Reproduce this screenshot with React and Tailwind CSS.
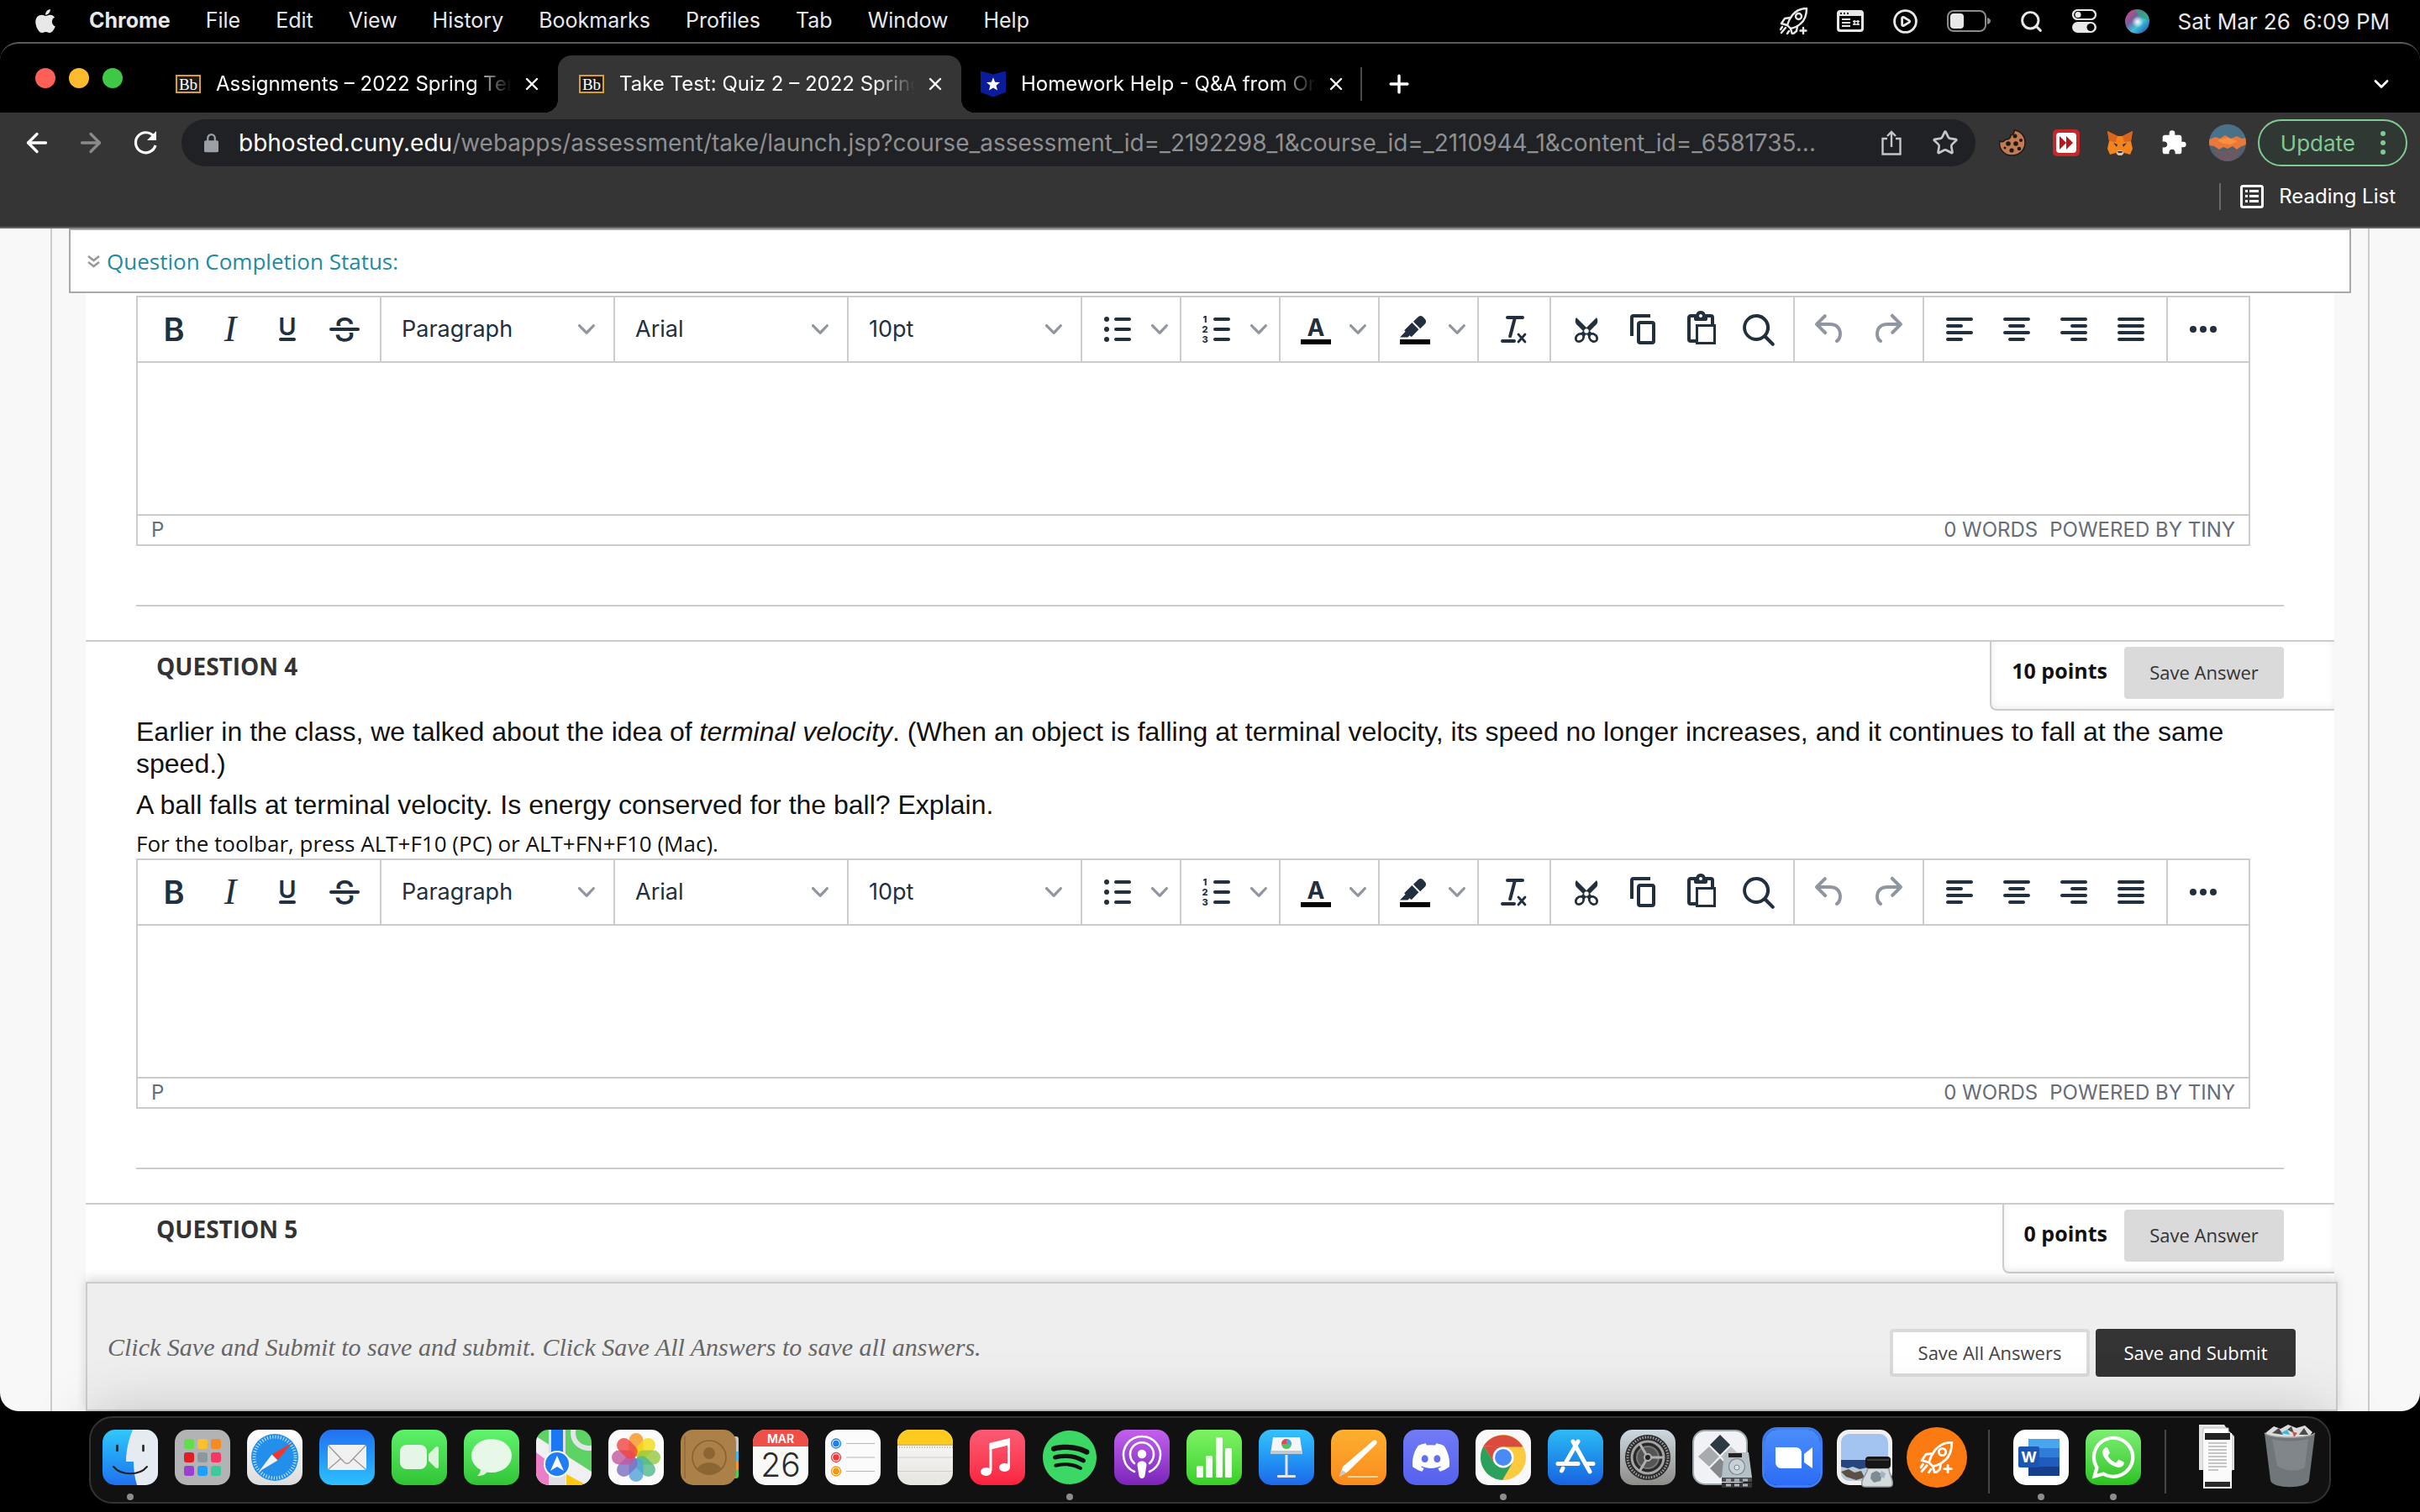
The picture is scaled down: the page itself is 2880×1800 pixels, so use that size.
import React, { useState } from 'react';
import { ArrowLeft, ArrowRight, ChevronDown, Plus, Search, Star, X, CirclePlay } from 'lucide-react';
import { FaApple, FaDiscord, FaSpotify, FaWhatsapp } from 'react-icons/fa';
import { MdExtension } from 'react-icons/md';

const MENU = ['File', 'Edit', 'View', 'History', 'Bookmarks', 'Profiles', 'Tab', 'Window', 'Help'];

const RocketIcon = ({ className }) => (
  <svg className={className} viewBox="0 0 34 32" fill="none" stroke="currentColor" strokeWidth="2.4" strokeLinejoin="round" strokeLinecap="round">
    <path d="M32 1c-7 0-13 3-17 8-3 4-5 8-6 12l4 4c5-1 9-3 12-6 5-4 7-10 7-18z" />
    <circle cx="22.500" cy="10.500" r="3.500" />
    <path d="M13 12l-7 1-4 6 7 2M21 22l-1 6-5 4-2-7M7 24l-5 6M11 28l-2 3M3 23l-2 3M28 24v7M24.500 27.500h7" />
  </svg>
);

const MenuBar = () => (
  <header className="flex h-[50px] items-center pl-[38px] pr-9 text-[25px] text-[#e8e8e8]">
    <FaApple className="mr-[36px] size-[32px]" />
    <nav className="flex items-center gap-[42px]">
      <button className="font-bold">Chrome</button>
      {MENU.map((item) => (
        <button key={item}>{item}</button>
      ))}
    </nav>
    <div className="ml-auto flex items-center gap-[34px]">
      <RocketIcon className="h-[32px] w-[34px]" />
      <svg className="h-[26px] w-[32px]" viewBox="0 0 32 26" fill="currentColor">
        <path fillRule="evenodd" d="M4 0h24a4 4 0 0 1 4 4v18a4 4 0 0 1-4 4H4a4 4 0 0 1-4-4V4a4 4 0 0 1 4-4zM3 7v15l1 1h24l1-1V7zM4 3v2h2V3zm4 0v2h2V3zm4 0v2h2V3z" />
        <path d="M6 10h10v2H6zM6 14h10v2H6zM6 18h10v2H6z" />
        <path d="M21 12v6M25 12v6M19 13.500h8M19 17h8" fill="none" stroke="currentColor" strokeWidth="1.500" />
      </svg>
      <CirclePlay className="size-[31px]" strokeWidth={2.2} />
      <svg className="h-[26px] w-[52px]" viewBox="0 0 52 26">
        <rect x="1" y="1" width="45" height="24" rx="7" fill="none" stroke="#8b8b8b" strokeWidth="2" />
        <rect x="4" y="4" width="16" height="18" rx="4" fill="#e8e8e8" />
        <path d="M48 9c3 1 4 2 4 4s-1 3-4 4z" fill="#8b8b8b" />
      </svg>
      <Search className="size-[29px]" strokeWidth={2.4} />
      <svg className="h-[28px] w-[29px]" viewBox="0 0 29 28">
        <rect x="1" y="1" width="27" height="11" rx="5.500" fill="none" stroke="#e8e8e8" strokeWidth="2.200" />
        <circle cx="7" cy="6.500" r="3.500" fill="#e8e8e8" />
        <rect x="0" y="15" width="29" height="13" rx="6.500" fill="#e8e8e8" />
        <circle cx="22" cy="21.500" r="4.500" fill="#000" />
      </svg>
      <svg className="size-[29px]" viewBox="0 0 29 29">
        <defs>
          <linearGradient id="siri" x1="0" y1="0" x2="1" y2="1">
            <stop offset="0" stopColor="#e8467c" />
            <stop offset=".35" stopColor="#7a5a9c" />
            <stop offset=".6" stopColor="#3fc3d8" />
            <stop offset="1" stopColor="#1b3fae" />
          </linearGradient>
          <radialGradient id="siriGlow">
            <stop offset="0" stopColor="#fff" />
            <stop offset="1" stopColor="#fff" stopOpacity="0" />
          </radialGradient>
        </defs>
        <circle cx="14.500" cy="14.500" r="14.500" fill="url(#siri)" />
        <path d="M12 1c8-2 15 4 16 12-6-1-12-4-16-12z" fill="#2fa37a" opacity=".8" />
        <circle cx="15" cy="15" r="7" fill="url(#siriGlow)" />
      </svg>
      <span className="whitespace-pre text-[26px]">Sat Mar 26  6:09 PM</span>
    </div>
  </header>
);

const BbIcon = () => (
  <span className="flex h-[22px] w-[30px] shrink-0 items-center justify-center border-2 border-[#d8a02a] bg-[#1a1a1a] font-['Liberation_Serif',serif] text-[19px] leading-none text-white">
    Bb
  </span>
);

const StarBadge = () => (
  <svg className="h-[32px] w-[30px] shrink-0" viewBox="0 0 31 32">
    <path d="M0 0l15.500 4L31 0v26l-15.500 6L0 26z" fill="#0a1c9c" />
    <path d="M15.500 8l2.300 5.600 6 .4-4.600 3.900 1.500 5.900-5.200-3.200-5.200 3.200 1.500-5.900L7.200 14l6-.4z" fill="#fff" />
  </svg>
);

const TABS = [
  { title: 'Assignments – 2022 Spring Term', icon: BbIcon },
  { title: 'Take Test: Quiz 2 – 2022 Spring', icon: BbIcon },
  { title: 'Homework Help - Q&A from Onl', icon: StarBadge },
];

const TabStrip = () => {
  const [active, setActive] = useState(1);
  return (
    <div className="flex h-[82px] items-center">
      <div className="flex w-[184px] shrink-0 gap-4 pl-[42px]">
        <button aria-label="Close window" className="size-6 rounded-full bg-[#fe5f57]" />
        <button aria-label="Minimize" className="size-6 rounded-full bg-[#febb2e]" />
        <button aria-label="Zoom" className="size-6 rounded-full bg-[#3fc845]" />
      </div>
      <div role="tablist" className="flex self-end">
        {TABS.map((tab, i) => {
          const Icon = tab.icon;
          return (
            <div
              key={tab.title}
              className={`relative flex h-[68px] w-[480px] items-center rounded-t-2xl pl-[25px] pr-[19px] last:w-[477px] last:pl-[23px] ${i === active ? 'bg-[#353535]' : ''}`}
            >
              {i === active && (
                <>
                  <span className="absolute -left-4 bottom-0 size-4 bg-[radial-gradient(circle_at_0_0,transparent_16px,#353535_16px)]" />
                  <span className="absolute -right-4 bottom-0 size-4 bg-[radial-gradient(circle_at_100%_0,transparent_16px,#353535_16px)]" />
                </>
              )}
              <Icon />
              <button
                role="tab"
                aria-selected={i === active}
                onClick={() => setActive(i)}
                className="ml-[18px] mr-3 flex-1 overflow-hidden whitespace-nowrap text-left text-[24px] text-white [mask-image:linear-gradient(to_right,black_86%,transparent)]"
              >
                {tab.title}
              </button>
              <button aria-label="Close tab" className="text-white">
                <X className="size-6" strokeWidth={2.4} />
              </button>
            </div>
          );
        })}
      </div>
      <div className="flex h-[68px] flex-1 items-center self-end pr-8 text-white">
        <span className="-ml-0.5 h-10 w-0.5 bg-[#4a4a4a]" />
        <button aria-label="New tab" className="ml-[27px]">
          <Plus className="size-[34px]" strokeWidth={2.4} />
        </button>
        <button aria-label="Search tabs" className="ml-auto">
          <ChevronDown className="size-[28px]" strokeWidth={2.4} />
        </button>
      </div>
    </div>
  );
};

const AddressBar = () => (
  <div className="flex h-[72px] items-center pl-[26px] pr-[15px]">
    <button aria-label="Back" className="text-white">
      <ArrowLeft className="size-[36px]" strokeWidth={2.2} />
    </button>
    <button aria-label="Forward" className="ml-[28px] text-[#8a8a8a]">
      <ArrowRight className="size-[36px]" strokeWidth={2.2} />
    </button>
    <button aria-label="Reload" className="ml-[31px] mr-[27px] text-white">
      <svg className="size-[32px]" viewBox="0 0 32 32" fill="none" stroke="currentColor" strokeWidth="3.200">
        <path d="M26 8.500A12 12 0 1 0 28 19" />
        <path d="M29 2v11H18z" fill="currentColor" stroke="none" />
      </svg>
    </button>
    <div className="flex h-14 min-w-0 flex-1 items-center rounded-full bg-[#202124] pl-[27px] pr-5 text-[28px]">
      <svg className="mr-[24px] h-[24px] w-[17px] shrink-0" viewBox="0 0 18 24" fill="#9aa0a6">
        <rect x="0" y="9" width="18" height="15" rx="2" />
        <path d="M4.500 10V6a4.500 4.500 0 0 1 9 0v4" fill="none" stroke="#9aa0a6" strokeWidth="2.400" />
      </svg>
      <span className="text-white">bbhosted.cuny.edu</span>
      <input
        aria-label="Address"
        className="min-w-0 flex-1 bg-transparent text-[#8e8f91] outline-none"
        defaultValue="/webapps/assessment/take/launch.jsp?course_assessment_id=_2192298_1&course_id=_2110944_1&content_id=_6581735..."
      />
      <button aria-label="Share" className="ml-4 text-[#c4c6c9]">
        <svg className="h-[30px] w-[24px]" viewBox="0 0 24 30" fill="none" stroke="currentColor" strokeWidth="2.400">
          <path d="M7 10H1.500v18.500h21V10H17M12 20V2M7 7l5-5 5 5" />
        </svg>
      </button>
      <button aria-label="Bookmark" className="ml-9 text-[#c4c6c9]">
        <Star className="size-[32px]" strokeWidth={2} />
      </button>
    </div>
    <div className="flex items-center gap-8 pl-7">
      <button aria-label="Cookies">
        <svg className="size-[32px]" viewBox="0 0 32 32">
          <path d="M14 1a5 5 0 0 0 4 6 5 5 0 0 0 6 5 5 5 0 0 0 7 2c2 10-6 17-14 17C7 31 1 24 1 16S6 2 14 1z" fill="#c37b52" stroke="#1f1713" strokeWidth="1.500" transform="matrix(-1 0 0 1 32 0)" />
          <g fill="#1f1713">
            <circle cx="19" cy="8" r="2.500" />
            <circle cx="11" cy="17" r="2.800" />
            <circle cx="20" cy="17" r="2.800" />
            <circle cx="26" cy="13" r="2" />
            <circle cx="15" cy="25" r="2.600" />
            <circle cx="24" cy="23" r="2.300" />
            <circle cx="7" cy="22" r="1.500" />
          </g>
        </svg>
      </button>
      <button aria-label="Video speed">
        <svg className="size-[32px]" viewBox="0 0 32 32">
          <rect width="32" height="32" rx="5" fill="#c4282b" />
          <rect x="4" y="4" width="24" height="24" rx="4" fill="#fff" />
          <path d="M8 8l8 8-8 8zM16 8l8 8-8 8z" fill="#b3191d" />
        </svg>
      </button>
      <button aria-label="Wallet">
        <svg className="size-[32px]" viewBox="0 0 32 32">
          <path d="M1 2l12 6h6l12-6-2 12 2 9-3 7-7-2-3 3h-4l-3-3-7 2-3-7 2-9z" fill="#f5841f" />
          <path d="M1 2l12 6-2 7-8-1zM31 2L19 8l2 7 8-1z" fill="#d9661c" />
          <path d="M13 25h6l1 4-2 2h-4l-2-2z" fill="#d8c5b5" />
          <path d="M8 16l5 2-1 3zM24 16l-5 2 1 3zM13 26h6l-1 2h-4z" fill="#233447" />
        </svg>
      </button>
      <button aria-label="Extensions" className="text-white">
        <MdExtension className="size-[32px]" />
      </button>
      <button aria-label="Profile" className="-ml-1.5">
        <svg className="size-[44px]" viewBox="0 0 44 44">
          <clipPath id="avatar">
            <circle cx="22" cy="22" r="22" />
          </clipPath>
          <g clipPath="url(#avatar)">
            <rect width="44" height="44" fill="#51606b" />
            <rect width="44" height="17" fill="#49728a" />
            <path d="M0 18l8-3 5 2 6-4 7 4 7-3 6 3 5-1v8l-7 3-4 3-5-4-6 3-5-2-5 3-6-4-6-1z" fill="#e9793a" />
            <path d="M10 19l12-3 12 4-8 4-9-1z" fill="#ff8f3e" />
            <path d="M6 30l12 2 12-2 8 3-10 11H14z" fill="#6b5a63" />
          </g>
        </svg>
      </button>
    </div>
    <button className="ml-[14px] flex h-14 items-center rounded-full border-2 border-[#81c995] bg-[#2f3832] pl-[25px] pr-6 text-[26px] text-[#81c995]">
      Update
      <svg className="ml-[30px] h-[28px] w-[6px]" viewBox="0 0 6 28" fill="currentColor">
        <circle cx="3" cy="3" r="3" />
        <circle cx="3" cy="14" r="3" />
        <circle cx="3" cy="25" r="3" />
      </svg>
    </button>
  </div>
);

const BookmarksBar = () => (
  <div className="flex h-[64px] justify-end pb-2 pr-[29px]">
    <div className="flex items-center">
      <span className="mr-[23px] h-8 w-0.5 bg-[#6a6a6a]" />
      <button className="flex items-center gap-[18px] text-[24px] text-white">
        <svg className="size-[28px]" viewBox="0 0 28 28" fill="currentColor">
          <rect x="1.500" y="1.500" width="25" height="25" rx="2" fill="none" stroke="currentColor" strokeWidth="3" />
          <path d="M6 6h3v3H6zM11 6h11v3H11zM6 12h3v3H6zM11 12h11v3H11zM6 18h3v3H6zM11 18h11v3H11z" />
        </svg>
        Reading List
      </button>
    </div>
  </div>
);

/* ---------- rich text editor ---------- */

const GlyphIcon = ({ children }) => (
  <svg className="size-12 shrink-0" viewBox="0 0 24 24" fill="currentColor">
    {children}
  </svg>
);

const ICONS = {
  bold: <text x="12.500" y="19" textAnchor="middle" fontSize="19" fontWeight="600" fontFamily="Inter">B</text>,
  italic: <text x="12" y="19" textAnchor="middle" fontSize="22" fontStyle="italic" fontFamily="Liberation Serif">I</text>,
  underline: (
    <>
      <text x="12" y="15.500" textAnchor="middle" fontSize="14.500" fontWeight="600" fontFamily="Inter">U</text>
      <rect x="7" y="17" width="10" height="2" rx="1" />
    </>
  ),
  strike: (
    <>
      <text x="12" y="19" textAnchor="middle" fontSize="19" fontWeight="500" fontFamily="Inter">S</text>
      <rect x="4" y="10" width="16" height="4" fill="#fff" />
      <rect x="3" y="11" width="18" height="2" rx="1" />
    </>
  ),
  bullets: (
    <>
      <rect x="10" y="5" width="10" height="2" rx="1" />
      <rect x="10" y="11" width="10" height="2" rx="1" />
      <rect x="10" y="17" width="10" height="2" rx="1" />
      <circle cx="5.500" cy="6" r="1.500" />
      <circle cx="5.500" cy="12" r="1.500" />
      <circle cx="5.500" cy="18" r="1.500" />
    </>
  ),
  numbers: (
    <>
      <rect x="10" y="5" width="10" height="2" rx="1" />
      <rect x="10" y="11" width="10" height="2" rx="1" />
      <rect x="10" y="17" width="10" height="2" rx="1" />
      <g fontSize="5.500" fontWeight="800" fontFamily="Inter" textAnchor="middle">
        <text x="5" y="8">1</text>
        <text x="5" y="14">2</text>
        <text x="5" y="20">3</text>
      </g>
    </>
  ),
  color: (
    <>
      <text x="12" y="16" textAnchor="middle" fontSize="14" fontWeight="700" fontFamily="Inter">A</text>
      <path d="M3 18h18v3H3z" fill="#000" />
    </>
  ),
  highlight: (
    <>
      <path d="M3 18h18v3H3z" fill="#000" />
      <path d="M7.700 16.700H3l3.300-3.300-.7-.8L10.200 8l4 4.100-4 4.200c-.2.2-.6.2-.8 0l-.6-.7-1.100 1.100zm5-7.500L11 7.400l3-2.900a2 2 0 0 1 2.600 0L18 6c.7.7.7 2 0 2.700l-2.900 2.900-1.800-1.800-.5-.6" />
    </>
  ),
  clear: (
    <>
      <path d="M13.200 6a1 1 0 0 1 0 .2l-2.600 10a1 1 0 0 1-1 .8h-.2a.8.8 0 0 1-.8-1l2.600-10H8a1 1 0 1 1 0-2h9a1 1 0 0 1 0 2h-3.800zM5 18h7a1 1 0 0 1 0 2H5a1 1 0 0 1 0-2z" />
      <path d="M14.500 15l4 4.500M18.500 15l-4 4.500" fill="none" stroke="currentColor" strokeWidth="1.400" strokeLinecap="round" />
    </>
  ),
  cut: (
    <path d="M18 15c.6.7 1 1.400 1 2.300 0 .8-.2 1.500-.7 2l-.8.5-1 .2c-.4 0-.8 0-1.200-.3a3.900 3.900 0 0 1-2.100-2.200c-.2-.5-.3-1-.2-1.500l-1-1-1 1c0 .5 0 1-.2 1.500-.1.5-.4 1-.9 1.400-.3.4-.7.6-1.200.8l-1.200.3c-.4 0-.7 0-1-.2-.3 0-.6-.3-.8-.5-.5-.5-.8-1.200-.7-2 0-.9.4-1.600 1-2.200A3.700 3.700 0 0 1 8.600 14H9l1-1-4-4-.5-1a3.300 3.300 0 0 1 0-2c0-.4.3-.7.5-1l6 6 6-6 .5 1a3.300 3.300 0 0 1 0 2c0 .4-.3.7-.5 1l-4 4 1 1h.5c.4 0 .8 0 1.200.3.5.2.9.4 1.200.8zm-8.500 2.200l.1-.4v-.3-.4a1 1 0 0 0-.2-.5 1 1 0 0 0-.4-.2 1.600 1.600 0 0 0-.8 0 2.600 2.600 0 0 0-.8.3 2.500 2.500 0 0 0-.9 1.100l-.1.4v.7l.2.5.5.2h.7a2.500 2.500 0 0 0 .8-.3 2.800 2.800 0 0 0 1-1zm2.500-2.800c.4 0 .7-.1 1-.4.3-.3.4-.6.4-1s-.1-.7-.4-1c-.3-.3-.6-.4-1-.4s-.7.1-1 .4c-.3.3-.4.6-.4 1s.1.7.4 1c.3.3.6.4 1 .4zm5.400 4l.2-.5v-.4-.3a2.600 2.600 0 0 0-.3-.8 2.400 2.400 0 0 0-.7-.7 2.500 2.500 0 0 0-.8-.3 1.500 1.500 0 0 0-.8 0 1 1 0 0 0-.4.2 1 1 0 0 0-.2.5 1.500 1.500 0 0 0 0 .7v.4l.3.4.3.4a2.800 2.800 0 0 0 .8.5l.4.1h.7l.5-.2z" />
  ),
  copy: <path d="M16 3H6a2 2 0 0 0-2 2v11h2V5h10V3zm1 4a2 2 0 0 1 2 2v10a2 2 0 0 1-2 2h-7a2 2 0 0 1-2-2V9c0-1.200.9-2 2-2h7zm0 12V9h-7v10h7z" />,
  paste: (
    <path fillRule="evenodd" d="M18 9V5h-2v1c0 .6-.4 1-1 1H9a1 1 0 0 1-1-1V5H6v13h3V9h9zM9 20H6a2 2 0 0 1-2-2V5c0-1.100.9-2 2-2h3.200A3 3 0 0 1 12 1a3 3 0 0 1 2.800 2H18a2 2 0 0 1 2 2v4h1v12H9v-1zm1.500-9.500v9h9v-9h-9zM12 3a1 1 0 0 0-1 1c0 .5.4 1 1 1s1-.5 1-1-.4-1-1-1z" />
  ),
  find: <path fillRule="evenodd" d="M16 17.300a8 8 0 1 1 1.400-1.400l4.300 4.400a1 1 0 0 1-1.400 1.400l-4.400-4.300zm-5-.3a6 6 0 1 0 0-12 6 6 0 0 0 0 12z" />,
  undo: <path d="M6.400 8H12c3.700 0 6.200 2 6.800 5.100.6 2.700-.4 5.600-2.300 6.800a1 1 0 0 1-1-1.800c1.100-.6 1.800-2.700 1.400-4.600-.5-2.100-2.100-3.500-4.900-3.500H6.400l3.300 3.300a1 1 0 1 1-1.400 1.400l-5-5a1 1 0 0 1 0-1.400l5-5a1 1 0 0 1 1.400 1.400L6.400 8z" />,
  redo: <path d="M17.600 10H12c-2.800 0-4.400 1.400-4.900 3.500-.4 2 .3 4 1.400 4.600a1 1 0 1 1-1 1.800c-2-1.200-2.900-4.100-2.300-6.800.6-3 3-5.100 6.800-5.100h5.600l-3.300-3.300a1 1 0 1 1 1.400-1.400l5 5a1 1 0 0 1 0 1.400l-5 5a1 1 0 0 1-1.400-1.400l3.300-3.300z" />,
  left: <path d="M5 5h14a1 1 0 0 1 0 2H5a1 1 0 0 1 0-2zM5 9h8a1 1 0 0 1 0 2H5a1 1 0 0 1 0-2zM5 13h14a1 1 0 0 1 0 2H5a1 1 0 0 1 0-2zM5 17h8a1 1 0 0 1 0 2H5a1 1 0 0 1 0-2z" />,
  center: <path d="M5 5h14a1 1 0 0 1 0 2H5a1 1 0 0 1 0-2zM8 9h8a1 1 0 0 1 0 2H8a1 1 0 0 1 0-2zM5 13h14a1 1 0 0 1 0 2H5a1 1 0 0 1 0-2zM8 17h8a1 1 0 0 1 0 2H8a1 1 0 0 1 0-2z" />,
  right: <path d="M5 5h14a1 1 0 0 1 0 2H5a1 1 0 0 1 0-2zM11 9h8a1 1 0 0 1 0 2h-8a1 1 0 0 1 0-2zM5 13h14a1 1 0 0 1 0 2H5a1 1 0 0 1 0-2zM11 17h8a1 1 0 0 1 0 2h-8a1 1 0 0 1 0-2z" />,
  justify: <path d="M5 5h14a1 1 0 0 1 0 2H5a1 1 0 0 1 0-2zM5 9h14a1 1 0 0 1 0 2H5a1 1 0 0 1 0-2zM5 13h14a1 1 0 0 1 0 2H5a1 1 0 0 1 0-2zM5 17h14a1 1 0 0 1 0 2H5a1 1 0 0 1 0-2z" />,
  more: (
    <>
      <circle cx="6" cy="12" r="2" />
      <circle cx="12" cy="12" r="2" />
      <circle cx="18" cy="12" r="2" />
    </>
  ),
};

const Caret = ({ className = '' }) => (
  <svg className={`size-5 shrink-0 text-[#9096a0] ${className}`} viewBox="0 0 10 10" fill="currentColor">
    <path d="M8.700 2.200c.3-.3.8-.3 1 0 .4.4.4.9 0 1.200L5.700 7.800c-.3.3-.9.3-1.200 0L.2 3.400a.8.8 0 0 1 0-1.200c.3-.3.8-.3 1.100 0L5 6l3.700-3.800z" />
  </svg>
);

const Group = ({ children }) => (
  <div className="flex items-center border-r-2 border-[#ccc] px-2 last:border-r-0">{children}</div>
);

const ToolButton = ({ name, disabled }) => (
  <button
    type="button"
    aria-label={name}
    disabled={disabled}
    className="flex h-[68px] w-[68px] items-center justify-center disabled:text-[#9096a0]"
  >
    <GlyphIcon>{ICONS[name]}</GlyphIcon>
  </button>
);

const SplitButton = ({ name }) => (
  <Group>
    <button type="button" aria-label={name} className="flex h-[68px] w-[100px] items-center gap-4 pl-[10px]">
      <GlyphIcon>{ICONS[name]}</GlyphIcon>
      <Caret />
    </button>
  </Group>
);

const ToolSelect = ({ label, options }) => (
  <Group>
    <div className="relative flex w-[260px] items-center">
      <select aria-label={label} className="w-full appearance-none bg-transparent pl-4 text-[27px] outline-none">
        {options.map((o) => (
          <option key={o}>{o}</option>
        ))}
      </select>
      <Caret className="pointer-events-none absolute right-[14px]" />
    </div>
  </Group>
);

const Editor = ({ id }) => (
  <div className="mr-10 border-2 border-[#ccc] bg-white text-[#222f3e]">
    <div role="toolbar" className="flex h-[78px] border-b-2 border-[#ccc]">
      <Group>
        {['bold', 'italic', 'underline', 'strike'].map((n) => (
          <ToolButton key={n} name={n} />
        ))}
      </Group>
      <ToolSelect label="Block format" options={['Paragraph', 'Heading 1', 'Heading 2']} />
      <ToolSelect label="Font" options={['Arial', 'Georgia', 'Verdana']} />
      <ToolSelect label="Font size" options={['10pt', '12pt', '14pt']} />
      {['bullets', 'numbers', 'color', 'highlight'].map((n) => (
        <SplitButton key={n} name={n} />
      ))}
      <Group>
        <ToolButton name="clear" />
      </Group>
      <Group>
        {['cut', 'copy', 'paste', 'find'].map((n) => (
          <ToolButton key={n} name={n} />
        ))}
      </Group>
      <Group>
        <ToolButton name="undo" disabled />
        <ToolButton name="redo" disabled />
      </Group>
      <Group>
        {['left', 'center', 'right', 'justify'].map((n) => (
          <ToolButton key={n} name={n} />
        ))}
      </Group>
      <Group>
        <ToolButton name="more" />
      </Group>
    </div>
    <textarea
      id={id}
      aria-label="Answer"
      className="block h-[180px] w-full resize-none px-4 py-3 font-['Liberation_Sans',sans-serif] text-[26px] outline-none"
    />
    <div className="flex h-9 items-center gap-[14px] border-t-2 border-[#ccc] px-4 text-[24px] text-[#646d78]">
      <span className="mr-auto">P</span>
      <span>0 WORDS</span>
      <a href="#tiny">POWERED BY TINY</a>
    </div>
  </div>
);

const QuestionHeader = ({ number, points }) => (
  <div className="flex h-[84px] items-stretch border-t-2 border-[#ccc]">
    <h3 className="ml-[84px] mt-[11px] text-[28px] font-bold leading-9 text-[#333]">QUESTION {number}</h3>
    <div className="ml-auto flex items-start rounded-bl-lg border-b-2 border-l-2 border-[#ccc] pl-6 pr-[60px] pt-1.5 shadow-[inset_0_-2px_8px_rgba(0,0,0,0.08)]">
      <span className="mr-5 text-[25px] font-bold leading-[56px] text-[#111]">{points} points</span>
      <button className="h-[62px] w-[190px] rounded-sm bg-[#dadada] pb-0.5 text-[22px] text-[#333]">Save Answer</button>
    </div>
  </div>
);

/* ---------- dock ---------- */

const Tile = ({ className = '', children }) => (
  <span className={`block size-[66px] overflow-hidden rounded-[15px] ${className}`}>
    <svg className="size-full" viewBox="0 0 66 66">
      {children}
    </svg>
  </span>
);

const PAD = ['#5fe04a', '#fbc02d', '#f58a1f', '#e01f24', '#8e979c', '#f93763', '#9b3fd0', '#1fa0f8', '#3fc99a'];
const PETALS = ['#f7941e', '#f2dc12', '#93c83d', '#4fb98b', '#4fa3dc', '#7a6fc0', '#c0589f', '#f1433f'];

const DOCK = [
  {
    name: 'Finder', running: true, icon: (
      <Tile className="bg-linear-to-b from-[#32c8fb] to-[#2270ee]">
        <path d="M36 0c-5 12-8 25-8 38h9c0 9 1 19 4 28h25V0z" fill="#e6eaf1" />
        <path d="M17.500 19v6M48.500 19v6" stroke="#222" strokeWidth="2.600" strokeLinecap="round" />
        <path d="M13 44c9 11 31 11 40 0" fill="none" stroke="#222" strokeWidth="2" strokeLinecap="round" />
      </Tile>
    ),
  },
  {
    name: 'Launchpad', icon: (
      <Tile className="bg-[#b2b3b4]">
        {PAD.map((c, i) => (
          <rect key={c} x={11 + (i % 3) * 16} y={11 + Math.floor(i / 3) * 16} width="12" height="12" rx="3" fill={c} />
        ))}
      </Tile>
    ),
  },
  {
    name: 'Safari', icon: (
      <Tile className="bg-linear-to-b from-white to-[#dcdcdc]">
        <circle cx="33" cy="33" r="28" fill="#2290ea" />
        <circle cx="33" cy="33" r="24.500" fill="none" stroke="#d5ebfc" strokeWidth="4" strokeDasharray="1 2.200" />
        <path d="M53 16L36.500 36.500 29.500 29.500z" fill="#f1362f" />
        <path d="M14 50L29.500 29.500 36.500 36.500z" fill="#f2f2f2" />
      </Tile>
    ),
  },
  {
    name: 'Mail', icon: (
      <Tile className="bg-linear-to-b from-[#246ff0] to-[#2fc0fd]">
        <rect x="10" y="18" width="46" height="30" rx="3" fill="#f0f0f0" />
        <path d="M11 19l18 19c2 3 6 3 8 0l18-19M11 47l15-13M55 47L40 34" fill="none" stroke="#9a9a9a" strokeWidth="1.300" />
      </Tile>
    ),
  },
  {
    name: 'FaceTime', icon: (
      <Tile className="bg-linear-to-b from-[#5df169] to-[#30c435]">
        <rect x="10" y="18" width="32" height="29" rx="8" fill="#e6f6e6" />
        <path d="M44 29l8-8c2-2 4-1 4 1v22c0 2-2 3-4 1l-8-8z" fill="#dcf3dc" />
      </Tile>
    ),
  },
  {
    name: 'Messages', icon: (
      <Tile className="bg-linear-to-b from-[#62f46e] to-[#30c435]">
        <ellipse cx="33" cy="31" rx="24" ry="20" fill="#e8f8e8" />
        <path d="M20 46c0 4-1 6-4 9 6 0 10-2 12-5z" fill="#dcf3dc" />
      </Tile>
    ),
  },
  {
    name: 'Maps', icon: (
      <Tile className="bg-[#5fd266]">
        <path d="M0 8l66 42v16H0z" fill="#f0f0f2" />
        <path d="M0 27l16 12v27H0z" fill="#e97fc6" />
        <path d="M36 53l24 13H36z" fill="#fbc70f" />
        <path d="M15 0h20v66H15z" fill="#dfe0e6" />
        <path d="M18 0h14v30H18z" fill="#1a78f4" />
        <circle cx="62" cy="4" r="18" fill="none" stroke="#e2e4e8" strokeWidth="6" />
        <circle cx="25" cy="41" r="16" fill="#fff" />
        <circle cx="25" cy="41" r="14" fill="#1f7df5" />
        <path d="M25 31l8 18-8-5-8 5z" fill="#fff" />
      </Tile>
    ),
  },
  {
    name: 'Photos', icon: (
      <Tile className="bg-[#fbfbfb]">
        {PETALS.map((c, i) => (
          <rect key={c} x="24.500" y="4" width="17" height="28" rx="8.500" fill={c} opacity=".8" transform={`rotate(${i * 45} 33 33)`} />
        ))}
      </Tile>
    ),
  },
  {
    name: 'Contacts', icon: (
      <svg className="size-[66px] overflow-visible" viewBox="0 0 66 66">
        <path d="M60 8h6a3 3 0 0 1 3 3v15h-9z" fill="#c8c8c8" />
        <path d="M60 26h9v11h-9z" fill="#47b7f0" />
        <path d="M60 37h9v11h-9z" fill="#f59a1b" />
        <path d="M60 48h9v7a3 3 0 0 1-3 3h-6z" fill="#55c95a" />
        <rect width="66" height="66" rx="15" fill="#ab8149" />
        <path d="M5 8v50" stroke="#8f6a38" strokeWidth="1.500" />
        <circle cx="34" cy="33" r="20" fill="none" stroke="#87632f" strokeWidth="1.600" />
        <circle cx="34" cy="28" r="7" fill="#8b6533" />
        <path d="M20 46c4-9 24-9 28 0-7 10-21 10-28 0z" fill="#8b6533" />
      </svg>
    ),
  },
  {
    name: 'Calendar', icon: (
      <Tile className="bg-[#f9f9f8]">
        <rect width="66" height="20" fill="#ee5049" />
        <text x="33" y="16" textAnchor="middle" fontSize="14" fontWeight="600" fill="#fff" fontFamily="Inter">MAR</text>
        <text x="33" y="56" textAnchor="middle" fontSize="39" fontWeight="300" fill="#2b2b2b" fontFamily="Inter">26</text>
      </Tile>
    ),
  },
  {
    name: 'Reminders', icon: (
      <Tile className="bg-[#fbfbfb]">
        {['#1a82f7', '#f2383b', '#f5960c'].map((c, i) => (
          <g key={c}>
            <circle cx="13" cy={16.5 + i * 16.5} r="5.500" fill="none" stroke={c} strokeWidth="1.300" />
            <circle cx="13" cy={16.5 + i * 16.5} r="3.800" fill={c} />
            <path d={`M25 ${16.5 + i * 16.5}h34`} stroke="#b5b5ba" strokeWidth="1.200" />
          </g>
        ))}
      </Tile>
    ),
  },
  {
    name: 'Notes', icon: (
      <Tile className="bg-linear-to-b from-[#fafafa] to-[#e7e5e0]">
        <rect width="66" height="17" fill="#fdcb1f" />
        <path d="M0 18h66" stroke="#b5a468" strokeWidth="1.500" />
        <path d="M2 21h64" stroke="#aaa" strokeWidth="1.500" strokeDasharray="1 2" />
        <path d="M0 33h66M0 49.500h66" stroke="#cfcfd2" strokeWidth="1.200" />
      </Tile>
    ),
  },
  {
    name: 'Music', icon: (
      <Tile className="bg-linear-to-b from-[#fb5a74] to-[#fa1f3e]">
        <path d="M25 49V17M46.500 45V12" fill="none" stroke="#fff" strokeWidth="3" />
        <path d="M23.500 16l24.500-6v8l-24.500 6z" fill="#fff" />
        <ellipse cx="19.500" cy="50" rx="6.500" ry="5" fill="#fff" />
        <ellipse cx="41.500" cy="45" rx="6.500" ry="5" fill="#fff" />
      </Tile>
    ),
  },
  { name: 'Spotify', running: true, icon: <FaSpotify className="size-[66px] text-[#3bd865]" /> },
  {
    name: 'Podcasts', icon: (
      <Tile className="bg-linear-to-b from-[#c460ee] to-[#7a24b8]">
        <g fill="none" stroke="#fff" strokeWidth="2.600" strokeLinecap="round">
          <path d="M24 50a22 22 0 1 1 18 0" />
          <path d="M24 40a14 14 0 1 1 18 0" />
        </g>
        <circle cx="33" cy="29" r="5.200" fill="#fff" />
        <path d="M27.500 42c0-6 11-6 11 0l-2 13c-1 4-6 4-7 0z" fill="#fff" />
      </Tile>
    ),
  },
  {
    name: 'Numbers', icon: (
      <Tile className="bg-linear-to-b from-[#7cf363] to-[#36d028]">
        <g fill="#f6fff4">
          <rect x="12" y="43" width="8" height="14" rx="1.500" />
          <rect x="23" y="31" width="8" height="26" rx="1.500" />
          <rect x="35" y="9" width="8" height="48" rx="1.500" />
          <rect x="46" y="22" width="8" height="35" rx="1.500" />
        </g>
      </Tile>
    ),
  },
  {
    name: 'Keynote', icon: (
      <Tile className="bg-linear-to-b from-[#36c3fc] to-[#1f68ea]">
        <path d="M17 9h32l3 20H14z" fill="#f6f6f6" />
        <path d="M14 29h38l-1-4H15z" fill="#bccbd6" />
        <circle cx="33" cy="17" r="6" fill="#52c45a" />
        <path d="M33 17v-6a6 6 0 0 0-6 6z" fill="#e5484d" />
        <path d="M33 11a6 6 0 0 1 6 6h-6z" fill="#36a8e8" />
        <path d="M33 30v25" stroke="#e4e4e4" strokeWidth="3" />
        <rect x="22" y="54" width="22" height="3" rx="1" fill="#e4e4e4" />
      </Tile>
    ),
  },
  {
    name: 'Pages', icon: (
      <Tile className="bg-linear-to-b from-[#fdb02e] to-[#fa8a1e]">
        <path d="M10 56l4-12 35-30c3-3 7-1 5 3L20 50z" fill="#fff" />
        <path d="M10 56l3-8 5 3z" fill="#c8c8c8" />
        <path d="M20 56h36" stroke="#fed9a5" strokeWidth="2" />
      </Tile>
    ),
  },
  {
    name: 'Discord', icon: (
      <span className="flex size-[66px] items-center justify-center rounded-[15px] bg-linear-to-b from-[#727cf5] to-[#5560ee]">
        <FaDiscord className="size-[48px] text-white" />
      </span>
    ),
  },
  {
    name: 'Chrome', running: true, icon: (
      <Tile className="bg-[#f9f9f9]">
        <circle cx="33" cy="33" r="27" fill="#fcca3f" />
        <path d="M9.600 19.500A27 27 0 0 1 56.400 20.500H33z" fill="#db4a3f" />
        <path d="M9.600 19.500L33 20.500v12.500l-11 6.500z" fill="#db4a3f" />
        <path d="M9.600 19.500A27 27 0 0 0 32 60l12-20.500-11-1-11 1z" fill="#2aa15c" />
        <circle cx="33" cy="33" r="12.500" fill="#fff" />
        <circle cx="33" cy="33" r="10" fill="#4a8af4" />
      </Tile>
    ),
  },
  {
    name: 'App Store', icon: (
      <Tile className="bg-linear-to-b from-[#2fbaf5] to-[#1c62e0]">
        <g stroke="#fff" strokeWidth="5" strokeLinecap="round">
          <path d="M36 14L22 38M30 14l20 36M18 46l-1.500 3" />
          <path d="M12 40.500h24M45 40.500h9" />
        </g>
      </Tile>
    ),
  },
  {
    name: 'Settings', icon: (
      <Tile className="bg-linear-to-b from-[#ccd9e0] to-[#8e8c88]">
        <circle cx="33" cy="33" r="27" fill="#2a2a2a" />
        <circle cx="33" cy="33" r="24" fill="none" stroke="#9a9a9a" strokeWidth="3" strokeDasharray="1.600 1.600" />
        <circle cx="33" cy="33" r="19" fill="none" stroke="#a5a5a5" strokeWidth="3" />
        <circle cx="33" cy="33" r="13" fill="#555" stroke="#777" strokeWidth="2" />
        <path d="M33 33h19M33 33l-10-17M33 33L23 50" stroke="#b0b0b0" strokeWidth="3" />
        <circle cx="33" cy="33" r="4" fill="#222" stroke="#b0b0b0" strokeWidth="2" />
      </Tile>
    ),
  },
  {
    name: 'Boot Camp', icon: (
      <svg className="size-[66px] overflow-visible" viewBox="0 0 66 66">
        <rect x="1" y="1" width="64" height="64" rx="14" fill="#f0f2f5" stroke="#9aa5ac" strokeWidth="2" />
        <path d="M33 6l12 12-12 12-12-12z" fill="#2c3a44" />
        <path d="M20 20l12 12-12 12L7 32z" fill="#a8abae" />
        <path d="M46 20l12 12-12 12-12-12z" fill="#c2c5c8" />
        <path d="M33 34l12 12-12 12-12-12z" fill="#85898d" />
        <path d="M38 27h29l4 30H35z" fill="#b5bfc6" />
        <circle cx="53" cy="44" r="9.500" fill="#c8d0d6" stroke="#7b858c" strokeWidth="1.200" />
        <circle cx="53" cy="45" r="3" fill="#dfe4e8" stroke="#7b858c" />
        <path d="M43 28h16v5H43z" fill="#222" />
        <path d="M35 57h36v5H35z" fill="#4b4d50" />
        <path d="M35 63h36v6H35z" fill="#333538" />
        <path d="M40 60h6M50 60h6M60 60h6M40 66h6M50 66h6M60 66h6" stroke="#b0b4b8" strokeWidth="3" />
      </svg>
    ),
  },
  {
    name: 'Zoom', icon: (
      <Tile className="bg-linear-to-b from-[#4a8dfb] to-[#2d6cf6] ring-3 ring-[#3c7df8]">
        <path d="M13 21h24c4 0 7 3 7 7v18H20c-4 0-7-3-7-7z" fill="#fff" />
        <path d="M47 29l10-8v25l-10-7z" fill="#fff" />
      </Tile>
    ),
  },
  {
    name: 'Preview', icon: (
      <svg className="size-[66px] overflow-visible" viewBox="0 0 66 66">
        <rect width="66" height="66" rx="15" fill="#f0f0f0" />
        <rect x="5" y="5" width="56" height="56" rx="10" fill="#a3c3f0" />
        <path d="M5 36h56v14H5z" fill="#27457e" />
        <path d="M5 44l8 2 6-2 8 3 10-2 12 3 12-2v5a10 10 0 0 1-10 10H15A10 10 0 0 1 5 51z" fill="#b9cbd6" />
        <path d="M5 50l9-3 7 4 8-2 4 8-10 3-12-4z" fill="#5d5145" />
        <path d="M37 46h25c0 6 3 9 4 15 1 5 0 7-4 7H34c-4 0-5-2-4-7 2-6 6-9 7-15z" fill="#d5dadd" stroke="#8d969b" strokeWidth="1.500" />
        <path d="M41 52l6-3 7 4-2 8-8 2-4-5z" fill="#7d8b95" />
        <path d="M53 49l5 3-2 6-5-3z" fill="#a4b4bf" />
        <rect x="34" y="32" width="30" height="14" rx="4" fill="#161616" />
        <path d="M36 36h26" stroke="#4a4a4a" strokeWidth="1.500" />
      </svg>
    ),
  },
  {
    name: 'Rocket Typist', icon: (
      <span className="flex size-[66px] items-center justify-center rounded-full bg-[#fb7a12] text-white ring-3 ring-[#fb7a12]">
        <RocketIcon className="h-[38px] w-[42px]" />
      </span>
    ),
  },
  { name: 'divider-1' },
  {
    name: 'Word', running: true, icon: (
      <Tile className="bg-white">
        <rect x="18" y="11" width="37" height="11" fill="#48a5ee" />
        <rect x="18" y="22" width="37" height="11" fill="#2f7dd6" />
        <rect x="18" y="33" width="37" height="11" fill="#1f5cbd" />
        <rect x="18" y="44" width="37" height="11" fill="#153f8c" />
        <rect x="6" y="20" width="25" height="25" rx="2" fill="#1c56b5" />
        <text x="18.500" y="39" textAnchor="middle" fontSize="18" fontWeight="700" fill="#fff" fontFamily="Inter">W</text>
      </Tile>
    ),
  },
  {
    name: 'WhatsApp', running: true, icon: (
      <span className="flex size-[66px] items-center justify-center rounded-[15px] bg-linear-to-b from-[#7bef72] to-[#28c31c]">
        <FaWhatsapp className="size-[58px] text-white" />
      </span>
    ),
  },
  { name: 'divider-2' },
  {
    name: 'Downloads', icon: (
      <svg className="size-[66px] overflow-visible" viewBox="0 0 66 66">
        <path d="M11 -6h30l4 6 8 8v40H11z" fill="#e4e4e4" />
        <path d="M16 -2h30v8h5v42H16z" fill="#fff" stroke="#bbb" />
        <rect x="16" y="4" width="34" height="66" fill="#fafafa" />
        <rect x="18" y="4" width="30" height="8" fill="#222" />
        <rect x="18" y="62" width="30" height="6" fill="#2a2a2a" />
        <path d="M22 16h22M22 20h22M22 24h22M22 28h22M22 32h22M22 36h22M22 40h22M22 44h22M22 48h12" stroke="#b5b5b5" strokeWidth="1.600" />
      </svg>
    ),
  },
  {
    name: 'Trash', icon: (
      <svg className="size-[66px] overflow-visible" viewBox="0 0 66 66">
        <path d="M4 4l10-8 8 3 9-5 10 4 10-3 9 8-6 8H10z" fill="#dcdcdc" />
        <path d="M12 4l8-6 5 8zM44 6l6-8 5 8zM30 0l5-4 3 8z" fill="#4b4b4b" />
        <path d="M22 4l8-4 3 6z" fill="#3fb8e0" />
        <path d="M36 2l6 2-4 5z" fill="#d4553a" />
        <path d="M3 4c8 7 52 7 60 0l-7 56c-1 11-45 11-46 0z" fill="#70777b" />
        <path d="M12 11c14 4 32 3 43 0l-4 34c-10 6-24 4-33-2z" fill="#8a9194" opacity=".6" />
        <path d="M3 4c8 7 52 7 60 0" fill="none" stroke="#9aa0a3" strokeWidth="1.500" />
      </svg>
    ),
  },
];

const Dock = () => (
  <footer className="relative flex justify-center pb-[10px] pt-1.5">
    <div className="flex gap-5 rounded-[28px] border-2 border-[#333] bg-[#111] px-[14px] pt-[14px] shadow-[0_0_72px_rgba(0,0,0,0.22)]">
      {DOCK.map((app) =>
        app.icon ? (
          <button key={app.name} aria-label={app.name} className="flex h-[86px] flex-col items-center">
            {app.icon}
            {app.running && <span className="mt-[10px] size-2 shrink-0 rounded-full bg-[#8d8d8d]" />}
          </button>
        ) : (
          <span key={app.name} className="mx-2 h-[76px] w-0.5 bg-[#474747]" />
        )
      )}
    </div>
  </footer>
);

export default function App() {
  return (
    <div className="flex min-h-screen flex-col overflow-hidden bg-black font-[Inter,sans-serif]">
      <MenuBar />
      <div className="flex flex-1 flex-col overflow-hidden rounded-[22px] border-t-2 border-[#5a5a5a] bg-black">
        <TabStrip />
        <div className="border-b-2 border-[#656565] bg-[#353535]">
          <AddressBar />
          <BookmarksBar />
        </div>

        <div className="flex flex-1 bg-[#f8f8f8] px-[60px]">
          <div className="flex min-w-0 flex-1 flex-col border-x-2 border-[#ccc] font-['Open_Sans',sans-serif]">
            <div className="mx-5 flex h-[77px] items-center border-2 border-[#a9a9a9] bg-white pl-5 pt-0.5 text-[26px]">
              <a href="#status" className="flex items-center gap-2 text-[#1e8ba3]">
                <svg className="size-[15px]" viewBox="0 0 15 15" fill="none" stroke="#999" strokeWidth="2.600">
                  <path d="M1 1l6.500 5L14 1M1 8l6.500 5L14 8" />
                </svg>
                Question Completion Status:
              </a>
            </div>

            <main className="mx-10 bg-white pb-[10px]">
              <div className="px-[60px] pb-10 pt-[3px]">
                <div className="font-[Inter,sans-serif]">
                  <Editor id="answer-3" />
                </div>
                <hr className="mt-[70px] border-t-2 border-[#ccc]" />
              </div>

              <section>
                <QuestionHeader number={4} points={10} />
                <div className="px-[60px] pb-10 pt-1.5">
                  <div className="space-y-[11px] font-['Liberation_Sans',Arial,sans-serif] text-[32px] leading-[38px] text-[#111]">
                    <p>
                      Earlier in the class, we talked about the idea of <em>terminal velocity</em>. (When an object is falling at
                      terminal velocity, its speed no longer increases, and it continues to fall at the same speed.)
                    </p>
                    <p>A ball falls at terminal velocity. Is energy conserved for the ball? Explain.</p>
                  </div>
                  <label htmlFor="answer-4" className="mt-[9px] block text-[26px] leading-9 text-[#111]">
                    For the toolbar, press ALT+F10 (PC) or ALT+FN+F10 (Mac).
                  </label>
                  <div className="font-[Inter,sans-serif]">
                    <Editor id="answer-4" />
                  </div>
                  <hr className="mt-[70px] border-t-2 border-[#ccc]" />
                </div>
              </section>

              <section>
                <QuestionHeader number={5} points={0} />
              </section>
            </main>

            <div className="ml-10 mr-9 flex flex-1 items-center border-2 border-[#ccc] bg-[#eee] pl-6 pr-12 shadow-[0_-4px_12px_rgba(0,0,0,0.15)]">
              <p className="mr-auto font-['Liberation_Serif',Georgia,serif] text-[30px] italic text-[#666]">
                Click Save and Submit to save and submit. Click Save All Answers to save all answers.
              </p>
              <div className="flex gap-[7px] pt-[14px] text-[22px]">
                <button className="h-[57px] w-[238px] rounded-sm border-4 border-[#dadada] bg-white text-[#444]">Save All Answers</button>
                <button className="h-[57px] w-[238px] rounded-sm bg-[#333] text-white">Save and Submit</button>
              </div>
            </div>
          </div>
        </div>
      </div>
      <Dock />
    </div>
  );
}
